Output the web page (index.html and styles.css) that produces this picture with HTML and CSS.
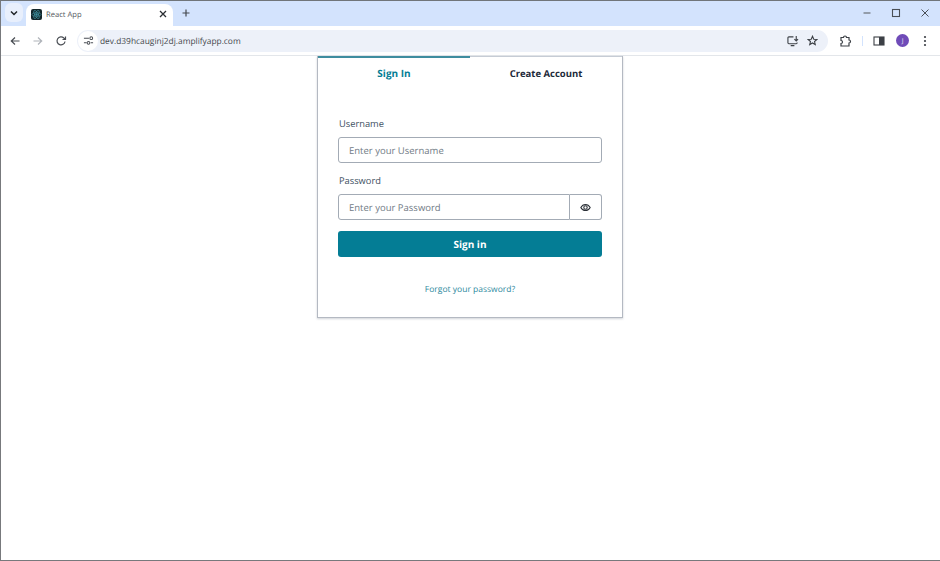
FILE: index.html
```html
<!DOCTYPE html>
<html lang="en">
<head>
<meta charset="utf-8">
<title>React App</title>
<link rel="stylesheet" href="styles.css">
</head>
<body>
<div class="window">
  <header class="tabstrip">
    <div class="tab-search">
      <svg width="10" height="10" viewBox="0 0 10 10"><path d="M2 3.500 5 6.500 8 3.500" fill="none" stroke="#1f2328" stroke-width="1.500"/></svg>
    </div>
    <div class="tab">
      <span class="favicon">
        <svg width="11" height="11" viewBox="0 0 12 12" fill="none" stroke="#3d8f9c" stroke-width=".7"><ellipse cx="6" cy="6" rx="5" ry="2"/><ellipse cx="6" cy="6" rx="5" ry="2" transform="rotate(60 6 6)"/><ellipse cx="6" cy="6" rx="5" ry="2" transform="rotate(120 6 6)"/><circle cx="6" cy="6" r="1" fill="#3d8f9c"/></svg>
      </span>
      <span class="tab-title">React App</span>
      <svg class="tab-close" width="10" height="10" viewBox="0 0 10 10"><path d="M2 2 8 8M8 2 2 8" stroke="#2a2e33" stroke-width="1.300"/></svg>
    </div>
    <svg class="new-tab" width="10" height="10" viewBox="0 0 10 10"><path d="M5 1.500v7M1.500 5h7" stroke="#44484e" stroke-width="1.200"/></svg>
    <div class="window-controls">
      <svg width="10" height="10" viewBox="0 0 10 10"><path d="M1.500 5h7" stroke="#6a6f76" stroke-width="1.200"/></svg>
      <svg width="10" height="10" viewBox="0 0 10 10"><rect x="1.500" y="1.500" width="7" height="7" fill="none" stroke="#4a4f56" stroke-width="1.100"/></svg>
      <svg width="10" height="10" viewBox="0 0 10 10"><path d="M1.500 1.500 8.500 8.500M8.500 1.500 1.500 8.500" stroke="#4a4f56" stroke-width="1"/></svg>
    </div>
  </header>
  <nav class="toolbar">
    <svg class="nav-btn" width="12" height="12" viewBox="0 0 12 12"><path d="M10.500 6H2M6 2.500 2.300 6 6 9.500" fill="none" stroke="#4a4e54" stroke-width="1.200"/></svg>
    <svg class="nav-btn" width="12" height="12" viewBox="0 0 12 12"><path d="M1.500 6H10M6 2.500 9.700 6 6 9.500" fill="none" stroke="#b0b4ba" stroke-width="1.200"/></svg>
    <svg class="nav-btn" width="12" height="12" viewBox="0 0 12 12"><path d="M10 6.500A4 4 0 1 1 8.800 3L10.300 4.300M10.500 1.500v3H7.500" fill="none" stroke="#4a4e54" stroke-width="1.200"/></svg>
    <div class="omnibox">
      <span class="site-info">
        <svg width="11" height="11" viewBox="0 0 12 12"><path d="M1 3.500h5.500M1 8.500h3M8.500 8.500H11" stroke="#4a4e54" stroke-width="1.100"/><circle cx="9" cy="3.500" r="1.500" fill="none" stroke="#4a4e54" stroke-width="1.100"/><circle cx="6" cy="8.500" r="1.500" fill="none" stroke="#4a4e54" stroke-width="1.100"/></svg>
      </span>
      <span class="url">dev.d39hcauginj2dj.amplifyapp.com</span>
      <span class="omni-icons">
        <svg width="12" height="12" viewBox="0 0 13 13" fill="none" stroke="#3c4046" stroke-width="1.200"><path d="M7 2H2a1 1 0 0 0-1 1v5.500a1 1 0 0 0 1 1h8a1 1 0 0 0 1-1V8M4 11.500h4M10 1v5M8 4.500l2 2 2-2"/></svg>
        <svg width="11" height="11" viewBox="0 0 13 13"><path d="M6.500 1.500 8 5l3.700.3-2.800 2.400.9 3.600-3.300-1.900-3.300 1.900.9-3.600L1.300 5.300 5 5z" fill="none" stroke="#3c4046" stroke-width="1.300"/></svg>
      </span>
    </div>
    <svg class="ext" width="14" height="14" viewBox="0 0 14 14"><path d="M3 3.500h2.500a1.500 1.500 0 0 1 3 0H11V6a1.500 1.500 0 0 1 0 3v3H3V9.500a1.500 1.500 0 0 0 0-3z" fill="none" stroke="#3c4046" stroke-width="1.200"/></svg>
    <span class="divider"></span>
    <svg class="side" width="12" height="12" viewBox="0 0 12 12"><rect x="1" y="2" width="10" height="8" fill="none" stroke="#3c4046" stroke-width="1.100"/><rect x="6" y="2" width="5" height="8" fill="#3c4046"/></svg>
    <span class="avatar">J</span>
    <svg class="menu" width="4" height="12" viewBox="0 0 4 12"><circle cx="2" cy="2" r="1.100" fill="#3c4046"/><circle cx="2" cy="6" r="1.100" fill="#3c4046"/><circle cx="2" cy="10" r="1.100" fill="#3c4046"/></svg>
  </nav>
  <main class="page">
    <section class="card">
      <div class="tabs">
        <div class="tabs-item active">Sign In</div>
        <div class="tabs-item">Create Account</div>
      </div>
      <form class="form">
        <div class="field">
          <label class="label">Username</label>
          <div class="input">Enter your Username</div>
        </div>
        <div class="field">
          <label class="label">Password</label>
          <div class="group">
            <div class="input input-joined">Enter your Password</div>
            <div class="eye">
              <svg width="11" height="9" viewBox="0 0 12 10" fill="none" stroke="#2a2f36" stroke-width="1.200"><path d="M.8 5C2 2.800 3.800 1.600 6 1.600S10 2.800 11.200 5C10 7.200 8.200 8.400 6 8.400S2 7.200.8 5z"/><circle cx="6" cy="5" r="1.900"/></svg>
            </div>
          </div>
        </div>
        <div class="submit">Sign in</div>
      </form>
      <div class="footer"><a class="forgot">Forgot your password?</a></div>
    </section>
  </main>
</div>
</body>
</html>
```
FILE: styles.css
```css
* { box-sizing: border-box; }
html, body { margin: 0; height: 100%; overflow: hidden; }
body { background: #fff; font-family: "Open Sans", "Noto Sans", sans-serif; text-rendering: geometricPrecision; }
.window {
  width: 940px; height: 561px; display: flex; flex-direction: column;
  border: 1px solid #77797c; border-top-color: #70757a; border-right-width: 0;
}
.tabstrip { height: 25px; flex: none; background: #d3e3fd; display: flex; align-items: center; padding-bottom: 2px; }
.tab-search {
  width: 18px; height: 19px; margin-left: 4px; background: #e8effc; border-radius: 6px;
  display: flex; align-items: center; justify-content: center;
}
.tab {
  width: 147px; height: 22px; margin: 0 0 -2px 3px; align-self: flex-end; background: #fff; border-radius: 8px 8px 0 0;
  display: flex; align-items: center; padding: 0 5px 2px;
}
.favicon { width: 11px; height: 11px; background: #14262b; border-radius: 2px; display: flex; flex: none; overflow: hidden; }
.tab-title { margin-left: 4px; padding-top: 1px; font-size: 7.600px; color: #55595e; flex: 1; }
.tab-close { flex: none; }
.new-tab { margin-left: 8px; }
.window-controls { margin-left: auto; display: flex; gap: 19px; padding-right: 10px; align-items: center; }
.toolbar { height: 30px; flex: none; background: #fff; border-bottom: 1px solid #e3e6ea; display: flex; align-items: center; padding-left: 8px; }
.nav-btn { margin-right: 11px; flex: none; }
.omnibox {
  width: 751px; height: 22px; margin-left: -1px; background: #edf1f9; border-radius: 11px;
  display: flex; align-items: center; padding-right: 10px;
}
.site-info { width: 20px; height: 20px; margin-left: 1px; border-radius: 50%; background: #fff; display: flex; align-items: center; justify-content: center; flex: none; }
.url { margin-left: 2px; padding-top: 1px; font-size: 8.400px; color: #45494e; }
.omni-icons { margin-left: auto; display: flex; gap: 8px; align-items: center; }
.ext { margin-left: 10px; flex: none; }
.divider { width: 1px; height: 10px; margin-left: 10px; background: #d3e3fd; }
.side { margin-left: 10px; flex: none; }
.avatar { width: 13px; height: 13px; margin-left: 11px; border-radius: 50%; background: #6f4bb8; color: #e8e0f5; font-size: 6.500px; display: flex; align-items: center; justify-content: center; flex: none; }
.menu { margin-left: 14px; flex: none; }
.page { flex: 1; display: flex; justify-content: center; align-items: flex-start; padding-right: 2px; }
.card {
  width: 306px; height: 262px; margin-left: 1px; background: #fff; border: 1px solid #b4b9c2; border-top-width: 0;
  box-shadow: 0 1px 2px rgba(100,110,125,.3); display: flex; flex-direction: column;
}
.tabs { display: flex; height: 35px; }
.tabs-item {
  flex: 1; border-top: 1px solid #c6ccd5; text-align: center; font-size: 9.500px; font-weight: 700; color: #1d2a3a;
  padding-top: 10px; line-height: 14px;
}
.tabs-item.active { font-size: 10px; color: #047d95; border-top: 2px solid #3f8d9f; padding-top: 8px; }
.form { display: flex; flex-direction: column; padding: 26px 20px 0; }
.field { display: flex; flex-direction: column; margin-bottom: 11px; }
.label { margin: 0 0 6px 1px; font-size: 9.300px; line-height: 14px; color: #40505f; }
.input {
  height: 26px; border: 1px solid #a3abb5; border-radius: 3px; padding: 0 10px; font-size: 9.500px;
  color: #727c86; display: flex; align-items: center;
}
.group { display: flex; }
.input-joined { flex: 1; border-radius: 3px 0 0 3px; }
.eye {
  width: 32px; height: 26px; border: 1px solid #a3abb5; border-left-width: 0; border-radius: 0 3px 3px 0;
  display: flex; align-items: center; justify-content: center;
}
.submit {
  height: 26px; background: #047d95; border-radius: 3px; color: #fff; font-size: 10px; font-weight: 700;
  display: flex; align-items: center; justify-content: center;
}
.footer { margin-top: 23px; text-align: center; line-height: 13px; }
.forgot { font-size: 8.500px; color: #2f8ba0; }
```
